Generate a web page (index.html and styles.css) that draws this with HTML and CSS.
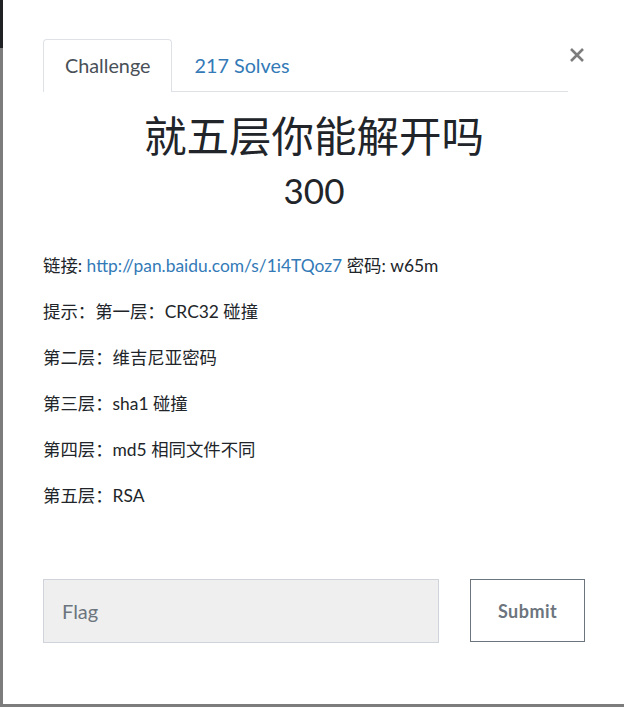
FILE: index.html
```html
<!DOCTYPE html>
<html lang="zh">
<head>
<meta charset="utf-8">
<title>Challenge</title>
<link rel="stylesheet" href="styles.css">
</head>
<body>
<div class="modal">
  <div class="top-row">
    <ul class="tabs">
      <li class="tab active">Challenge</li>
      <li class="tab"><a href="#">217 Solves</a></li>
    </ul>
    <button class="close" type="button" aria-label="Close">
      <svg width="16" height="16" viewBox="0 0 16 16"><path d="M2 2 L14 14 M14 2 L2 14" stroke="#7d7d7d" stroke-width="2.6" fill="none"/></svg>
    </button>
  </div>
  <h3 class="name">就五层你能解开吗</h3>
  <h4 class="value">300</h4>
  <div class="desc">
    <p>链接: <a href="#">http://pan.baidu.com/s/1i4TQoz7</a> 密码: w65m</p>
    <p>提示：第一层：CRC32 碰撞</p>
    <p>第二层：维吉尼亚密码</p>
    <p>第三层：sha1 碰撞</p>
    <p>第四层：md5 相同文件不同</p>
    <p>第五层：RSA</p>
  </div>
  <form class="submit-row">
    <input class="flag" type="text" placeholder="Flag">
    <button class="submit" type="button">Submit</button>
  </form>
</div>
</body>
</html>
```
FILE: styles.css
```css
html, body {
  margin: 0;
  padding: 0;
}
body {
  width: 624px;
  height: 707px;
  overflow: hidden;
  background: linear-gradient(#1f2124 0, #1f2124 48px, #7c7c7c 48px);
  font-family: Lato, "Noto Sans CJK SC", sans-serif;
  color: #212529;
}
.modal {
  margin-left: 3px;
  height: 704px;
  box-sizing: border-box;
  background: #fff;
  padding: 39px 39px 0 40px;
}
.top-row {
  display: flex;
  align-items: flex-start;
}
.tabs {
  flex: 1;
  display: flex;
  list-style: none;
  margin: 0;
  padding: 0;
  border-bottom: 1px solid #dee2e6;
}
.tab {
  font-size: 19.8px;
  line-height: 26px;
  padding: 12px 21px 13px 21px;
  border: 1px solid transparent;
  border-bottom: 0;
  border-radius: 4px 4px 0 0;
  margin-bottom: -1px;
}
.tab.active {
  border-color: #dee2e6;
  background: #fff;
  color: #495057;
  padding-bottom: 14px;
}
.tab a {
  color: #337ab7;
  text-decoration: none;
}
.close {
  width: 17px;
  margin: 8px 0 0 0;
  padding: 0;
  border: 0;
  background: none;
  display: flex;
  justify-content: flex-end;
}
.name {
  margin: 15px 0 0 0;
  text-align: center;
  font-size: 42.5px;
  font-weight: 400;
  line-height: 58px;
}
.value {
  margin: 0;
  text-align: center;
  font-size: 35px;
  font-weight: 400;
  line-height: 50px;
}
.desc {
  margin-top: 37px;
  font-size: 17.4px;
}
.desc p {
  margin: 0 0 18px 0;
  line-height: 28px;
}
.desc a {
  color: #337ab7;
  text-decoration: none;
}
.submit-row {
  display: flex;
  margin-top: 69px;
  gap: 31px;
}
.flag {
  width: 397px;
  height: 64px;
  box-sizing: border-box;
  border: 1px solid #ced4da;
  background: #efefef;
  padding: 0 18px;
  font-family: Lato, sans-serif;
  font-size: 20px;
  color: #495057;
  outline: none;
}
.flag::placeholder {
  color: #6c757d;
}
.submit {
  width: 115px;
  height: 63px;
  box-sizing: border-box;
  border: 1px solid #6c757d;
  background: #fff;
  color: #6c757d;
  font-family: Lato, sans-serif;
  font-weight: 700;
  font-size: 18px;
  letter-spacing: 0.5px;
}
```
